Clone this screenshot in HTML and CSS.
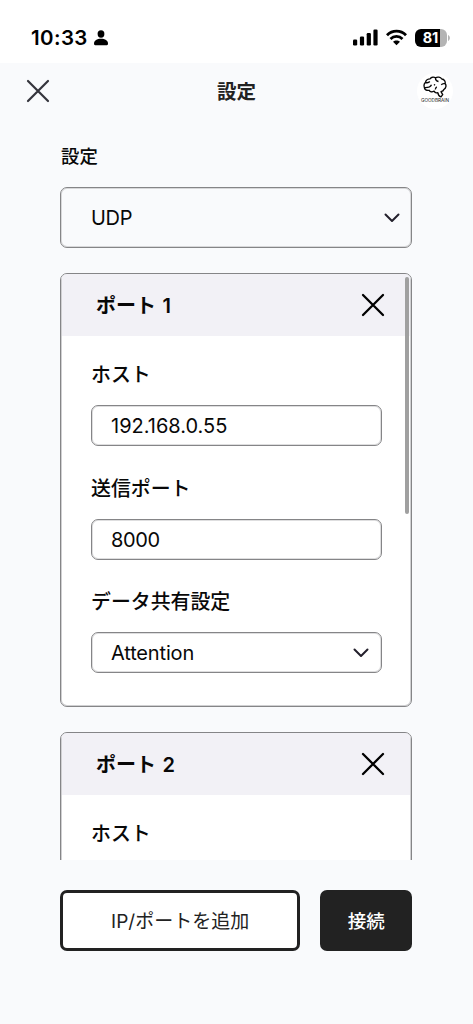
FILE: index.html
```html
<!DOCTYPE html>
<html lang="ja">
<head>
<meta charset="utf-8">
<title>設定</title>
<link rel="stylesheet" href="styles.css">
</head>
<body>
<div class="status">
  <span class="time">10:33</span>
  <svg class="person" width="14" height="16" viewBox="0 0 14 16"><ellipse cx="7" cy="4" rx="3.400" ry="3.700"/><path d="M0 13.600C0 10.500 3 8.700 7 8.700s7 1.800 7 4.900c0 1.200-.4 1.600-1.200 1.600H1.200C.4 15.200 0 14.800 0 13.600Z"/></svg>
  <span class="spacer"></span>
  <svg class="signal" width="25" height="17" viewBox="0 0 25 17"><rect x="0" y="10.500" width="4.200" height="6" rx="1.200"/><rect x="6.900" y="7.500" width="4.200" height="9" rx="1.200"/><rect x="13.700" y="4" width="4.200" height="12.500" rx="1.200"/><rect x="20.400" y="0.500" width="4.200" height="16" rx="1.200"/></svg>
  <svg class="wifi" width="21" height="17" viewBox="0 0 21 17"><g fill="none" stroke="#000" stroke-width="2.800"><path d="M1 6.200C6.300.8 14.700.8 20 6.200"/><path d="M4.500 9.900c3.400-3.300 8.600-3.300 12 0"/></g><path d="M10.500 16.300 7 12.800c2-1.900 5-1.900 7 0Z"/></svg>
  <div class="battery"><span class="charge">81</span></div>
  <svg class="cap" width="2" height="6" viewBox="0 0 2 6"><path d="M0 0c2.500 1 2.500 5 0 6Z" fill="#b4b4b4"/></svg>
</div>
<header class="bar">
  <svg class="close" width="24" height="24" viewBox="0 0 24 24"><path d="M2 2 22 22M22 2 2 22"/></svg>
  <h1 class="title">設定</h1>
  <div class="logo">
    <svg width="24" height="22" viewBox="0 0 24 22"><path d="M7 2.800C8.500.9 11 .8 12.500 1.800 14.500.6 17.500 1 18.800 3c2.500.3 3.800 2.500 3.300 4.500 1.500 1.700 1 4.800-1.100 5.800-.5 1.700-1.500 2.200-3 2.400l1.700 3-1.700 2.100c-2.200-.5-2.900-2.200-3.200-4.200-1.700.6-3.100 0-3.700-1.500-2 1.200-4.300.9-5-.8-2.500.5-4.700-.7-4.800-3.200C.8 9.500 1.100 7.500 2.500 6.300 2.800 4.300 5 2.800 7 2.800ZM12.500 1.800c-.2 2.200.9 3.400 3 3.700M2.500 6.500C4.300 7 5.800 6.700 6.800 5.500M1.500 11.600c3.900.2 6-.6 7-2.900M11.800 8.200l-.6 1.200M22 7.700c-1.600-.3-3 0-3.700 1.200M13.800 10.800c-.9.500-1.300 1.400-1.500 2.700"/></svg>
    <span class="brand">GOODBRAIN</span>
  </div>
</header>
<main class="content">
  <div class="label">設定</div>
  <div class="protocol"><span class="latin udp">UDP</span><svg class="chev" width="16" height="10" viewBox="0 0 16 10"><path d="M1.500 1.500 8 8l6.500-6.500"/></svg></div>
  <div class="ports">
    <section class="card">
      <div class="card-head"><h2 class="port">ポート 1</h2><svg class="remove" width="24" height="24" viewBox="0 0 24 24"><path d="M2 2 22 22M22 2 2 22"/></svg></div>
      <div class="fields">
        <div class="name">ホスト</div>
        <div class="field"><span class="latin ip">192.168.0.55</span></div>
        <div class="name">送信ポート</div>
        <div class="field"><span class="latin num">8000</span></div>
        <div class="name">データ共有設定</div>
        <div class="field"><span class="latin word">Attention</span><svg class="chev" width="16" height="10" viewBox="0 0 16 10"><path d="M1.500 1.500 8 8l6.500-6.500"/></svg></div>
      </div>
    </section>
    <section class="card">
      <div class="card-head"><h2 class="port">ポート 2</h2><svg class="remove" width="24" height="24" viewBox="0 0 24 24"><path d="M2 2 22 22M22 2 2 22"/></svg></div>
      <div class="fields"><div class="name">ホスト</div><div class="field"></div></div>
    </section>
    <div class="thumb"></div>
  </div>
  <div class="actions">
    <div class="add">IP/ポートを追加</div>
    <div class="connect">接続</div>
  </div>
</main>
</body>
</html>
```

FILE: styles.css
```css
* { box-sizing: border-box; }
body {
  margin: 0;
  height: 1024px;
  overflow: hidden;
  background: #f9fafc;
  color: #080808;
  font-family: Inter, "Noto Sans CJK JP", sans-serif;
}
h1, h2 { margin: 0; }
svg { display: block; flex: none; }
.status {
  display: flex;
  align-items: center;
  height: 63px;
  padding: 12px 23px 0 31px;
  background: #fff;
}
.time { font-size: 20.5px; font-weight: 600; line-height: 26px; letter-spacing: 0.4px; width: 57px; white-space: nowrap; color: #000; }
.person { margin-left: 6px; }
.spacer { flex: 1; }
.wifi { margin: 0 8px 0 8px; }
.battery {
  width: 32px;
  height: 18px;
  border-radius: 6px;
  overflow: hidden;
  background: linear-gradient(90deg, #000 0 25px, #b4b4b4 25px);
}
.charge {
  display: block;
  padding-right: 1px;
  text-align: center;
  font-size: 14.5px;
  font-weight: 700;
  line-height: 18px;
  color: #fff;
}
.cap { margin-left: 1px; }
.bar {
  display: grid;
  grid-template-columns: 36px 1fr 36px;
  align-items: center;
  height: 56px;
  padding: 0 20px 0 26px;
}
.close { fill: none; stroke: #34343c; stroke-width: 2.2; stroke-linecap: round; }
.title { font-size: 19.5px; font-weight: 700; line-height: 30px; text-align: center; color: #222; padding: 1px 6px 0 0; }
.logo {
  display: flex;
  flex-direction: column;
  align-items: center;
  width: 36px;
  height: 36px;
  padding-top: 3px;
  border-radius: 50%;
  background: #fff;
}
.logo svg { fill: none; stroke: #080808; stroke-width: 1.35; stroke-linejoin: round; }
.brand { font-size: 4.7px; line-height: 5px; color: #222; white-space: nowrap; }
.content { padding: 22px 61px 0 60px; }
.label { height: 30px; font-size: 18.4px; font-weight: 500; line-height: 30px; padding-left: 1px; }
.protocol {
  display: flex;
  align-items: center;
  justify-content: space-between;
  height: 61px;
  margin-top: 16px;
  padding: 0 11px 0 30px;
  border: 1px solid #858587;
  box-shadow: inset 0 0 0 1px #d8d8da;
  border-radius: 7px;
}
.latin { font-size: 20px; letter-spacing: -0.4px; line-height: 26px; }
.udp { letter-spacing: -0.3px; }
.ip { letter-spacing: 0; }
.word { letter-spacing: -0.15px; }
.num { padding-top: 1px; }
.chev { fill: none; stroke: #24202c; stroke-width: 2; stroke-linecap: round; stroke-linejoin: round; }
.ports {
  position: relative;
  display: flex;
  flex-direction: column;
  gap: 25px;
  height: 587px;
  margin-top: 25px;
  overflow: hidden;
}
.card {
  flex: none;
  height: 434px;
  border: 1px solid #858587;
  box-shadow: inset 0 0 0 1px #d0d0d2;
  border-radius: 7px;
  background: #fff;
  overflow: hidden;
}
.card-head {
  display: flex;
  align-items: center;
  justify-content: space-between;
  height: 62px;
  padding: 0 26px 0 35px;
  background: #f2f1f6;
  box-shadow: inset 1px 0 #d0d0d2, inset -1px 0 #d0d0d2;
}
.port { font-size: 20px; font-weight: 600; line-height: 30px; word-spacing: 1.5px; padding-top: 1px; }
.remove { fill: none; stroke: #000; stroke-width: 2.3; stroke-linecap: round; margin-top: -1px; }
.fields { padding: 24px 29px 0 30px; }
.name { height: 30px; font-size: 19.9px; font-weight: 500; line-height: 30px; }
.field {
  display: flex;
  align-items: center;
  justify-content: space-between;
  height: 41px;
  margin: 15px 0 27.5px;
  padding: 0 12px 0 19px;
  border: 1px solid #858587;
  box-shadow: inset 0 0 0 1px #dededf;
  border-radius: 7px;
}
.thumb {
  position: absolute;
  top: 4px;
  right: 3px;
  width: 4px;
  height: 237px;
  border-radius: 2px;
  background: #a0a0a0;
}
.actions { display: flex; gap: 20px; margin-top: 30px; }
.add, .connect {
  height: 61px;
  border-radius: 7px;
  font-size: 18.5px;
  font-weight: 400;
  text-align: center;
  white-space: nowrap;
}
.add { width: 241px; border: 3px solid #222; background: #fff; color: #222; font-size: 19px; line-height: 57px; }
.connect { width: 92px; background: #222; color: #fff; line-height: 63px; font-weight: 500; }
```
